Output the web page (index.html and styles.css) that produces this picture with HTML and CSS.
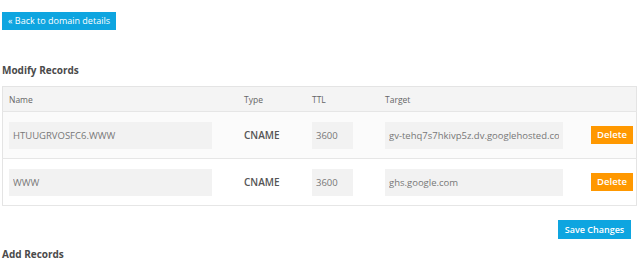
FILE: index.html
```
<html lang="en">
<head>
<meta charset="UTF-8" />
<title>Modify Records</title>
<link rel="stylesheet" href="styles.css">
</head>
<body>

<div class="page">
  <a class="btn btn-blue back" href="#">&laquo; Back to domain details</a>

  <h3 class="title">Modify Records</h3>

  <table class="records">
    <tr class="head">
      <th class="c-name">Name</th>
      <th class="c-type">Type</th>
      <th class="c-ttl">TTL</th>
      <th class="c-target">Target</th>
      <th class="c-act"></th>
    </tr>
    <tr class="odd">
      <td><input class="in in-name" value="HTUUGRVOSFC6.WWW"></td>
      <td class="type">CNAME</td>
      <td><input class="in in-ttl" value="3600"></td>
      <td><input class="in in-target" value="gv-tehq7s7hkivp5z.dv.googlehosted.com"></td>
      <td class="act"><button class="btn btn-orange">Delete</button></td>
    </tr>
    <tr>
      <td><input class="in in-name" value="WWW"></td>
      <td class="type">CNAME</td>
      <td><input class="in in-ttl" value="3600"></td>
      <td><input class="in in-target" value="ghs.google.com"></td>
      <td class="act"><button class="btn btn-orange">Delete</button></td>
    </tr>
  </table>

  <div class="save-row">
    <button class="btn btn-blue save">Save Changes</button>
  </div>

  <h3 class="title add">Add Records</h3>
</div>

</body>
</html>
```

FILE: styles.css
```
body {
  font-family: "Open Sans", sans-serif;
  background-color: #fff;
  color: #555;
  margin: 0;
  padding: 0;
}
.page {
  padding: 12px 3px 0 2px;
}
.btn {
  display: inline-block;
  border: none;
  color: #fff;
  font-family: "Open Sans", sans-serif;
  font-size: 9.5px;
  text-decoration: none;
  cursor: pointer;
  padding: 0;
}
.btn-blue {
  background-color: #0ea5e0;
}
.btn-orange {
  background-color: #ff9800;
  font-weight: 600;
  width: 42px;
  height: 18px;
  line-height: 18px;
}
.back {
  width: 114px;
  height: 18px;
  line-height: 18px;
  text-align: center;
  font-size: 9px;
}
.title {
  font-size: 10px;
  font-weight: 700;
  color: #4a4a4a;
  margin: 33px 0 0 0;
  line-height: 14px;
}
.records {
  width: 100%;
  border-collapse: collapse;
  border: 1px solid #e4e4e4;
  margin-top: 9px;
  table-layout: fixed;
}
.records th {
  background-color: #f4f4f4;
  color: #666;
  font-size: 8.5px;
  font-weight: 400;
  text-align: left;
  height: 25px;
  padding: 0 0 0 6px;
  border-bottom: 1px solid #e6e6e6;
}
.records td {
  height: 47px;
  padding: 0 0 0 6px;
  border-bottom: 1px solid #e6e6e6;
  vertical-align: middle;
}
.records tr.odd td {
  background-color: #fbfbfb;
}
.c-name { width: 229px; }
.c-type { width: 62px; }
.c-ttl { width: 67px; }
.c-target { width: 200px; }
.records td.type {
  font-size: 10px;
  font-weight: 600;
  color: #555;
}
.in {
  height: 27px;
  border: none;
  background-color: #f2f2f2;
  color: #777;
  font-family: "Open Sans", sans-serif;
  font-size: 9.5px;
  padding: 0 4px;
  box-sizing: border-box;
  outline: none;
}
.in-name { width: 203px; }
.in-ttl { width: 41px; }
.in-target { width: 178px; }
.records td.act {
  text-align: right;
  padding-right: 5px;
}
.save-row {
  text-align: right;
  padding-right: 6px;
  margin-top: 14px;
}
.save {
  width: 73px;
  height: 19px;
  line-height: 19px;
  font-weight: 600;
  font-size: 9px;
}
.title.add {
  margin-top: 8px;
}
```
